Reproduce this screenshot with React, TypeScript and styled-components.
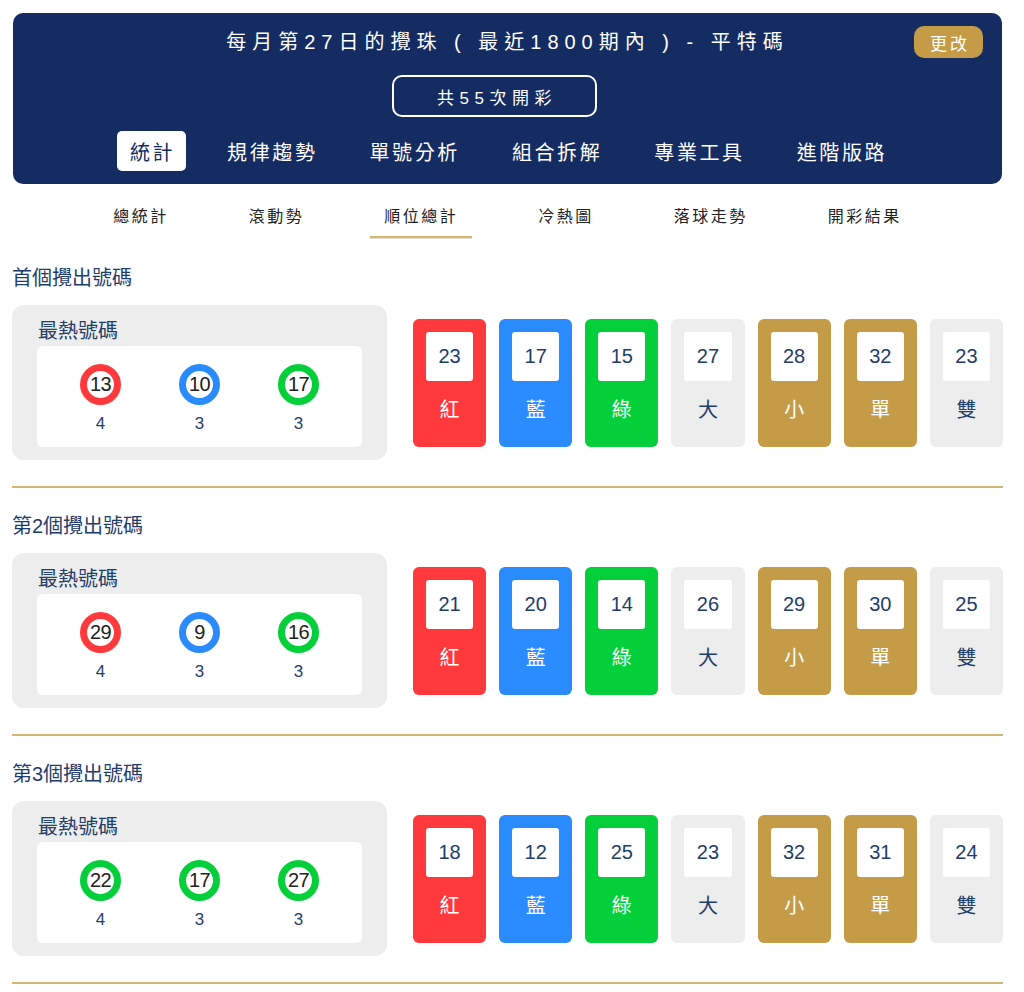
import React from 'react';
import styled, { createGlobalStyle } from 'styled-components';

const COLORS = {
    navy: '#142c62',
    text: '#1f3d6b',
    gold: '#c49b47',
    line: '#d2b677',
    red: '#ff393c',
    blue: '#2a8bff',
    green: '#02cf39',
    grey: '#ededed',
    white: '#ffffff',
};

const FONT = `"Liberation Sans", "Noto Sans CJK TC", sans-serif`;

const GlobalStyle = createGlobalStyle`
    body {
        margin: 0;
        background: #fff;
        font-family: ${FONT};
    }
`;

const Page = styled.div`
    width: 991px;
    padding: 13px 0 0 12px;
`;

const Header = styled.header`
    margin: 0 1px;
    padding: 13px 19px 13px;
    background: ${COLORS.navy};
    border-radius: 10px;
    color: ${COLORS.white};
`;

const TitleRow = styled.div`
    display: grid;
    grid-template-columns: 1fr auto 1fr;
    align-items: center;
    height: 32px;
`;

const Title = styled.h1`
    grid-column: 2;
    margin: 0;
    font-size: 20px;
    font-weight: 400;
    letter-spacing: 6px;
    line-height: 28px;
    white-space: pre;
`;

const ChangeButton = styled.button`
    justify-self: end;
    width: 69px;
    height: 32px;
    border: none;
    border-radius: 10px;
    background: ${COLORS.gold};
    color: ${COLORS.white};
    font-family: ${FONT};
    font-size: 17px;
    letter-spacing: 3px;
    padding: 0 0 0 3px;
`;

const CountRow = styled.div`
    display: flex;
    justify-content: center;
    margin-top: 17px;
    padding-right: 26px;
`;

const CountBox = styled.div`
    width: 196px;
    height: 38px;
    border: 2px solid ${COLORS.white};
    border-radius: 10px;
    display: flex;
    align-items: center;
    justify-content: center;
    font-size: 17px;
    letter-spacing: 5.5px;
    padding-left: 5px;
    box-sizing: content-box;
`;

const MainNav = styled.nav`
    display: flex;
    justify-content: center;
    gap: 28px;
    margin-top: 14px;
`;

const MainTab = styled.div<{ $active?: boolean }>`
    height: 40px;
    padding: 0 11px 0 13px;
    border-radius: 5px;
    display: flex;
    align-items: center;
    font-size: 20px;
    letter-spacing: 2.6px;
    background: ${(p) => (p.$active ? COLORS.white : 'transparent')};
    color: ${(p) => (p.$active ? COLORS.navy : COLORS.white)};
`;

const SubNav = styled.nav`
    display: flex;
    justify-content: center;
    gap: 52px;
    margin: 12px 0 2px;
`;

const SubTab = styled.div<{ $active?: boolean }>`
    padding: 9px 14px 6px;
    line-height: 24px;
    font-size: 16px;
    letter-spacing: 2.5px;
    color: #222;
    border-bottom: 3px solid transparent;
    ${(p) =>
        p.$active &&
        `
        border-bottom: 2px solid #d8b672;
        box-shadow: 0 1px 0 #e6e0d2;
    `}
`;

const Section = styled.section`
    padding-top: 24px;
    border-bottom: 2px solid ${COLORS.line};
`;

const SectionTitle = styled.h2`
    margin: 0;
    font-size: 20px;
    font-weight: 400;
    line-height: 28px;
    color: ${COLORS.text};
`;

const SectionBody = styled.div`
    display: flex;
    align-items: center;
    gap: 26px;
    margin: 13px 0 26px;
`;

const HotCard = styled.div`
    width: 325px;
    height: 143px;
    padding: 12px 25px 0;
    background: ${COLORS.grey};
    border-radius: 12px;
`;

const HotTitle = styled.div`
    font-size: 20px;
    line-height: 28px;
    padding-left: 1px;
    color: ${COLORS.text};
`;

const HotBox = styled.div`
    margin-top: 1px;
    height: 101px;
    padding: 0 14px;
    background: ${COLORS.white};
    border-radius: 6px;
    display: grid;
    grid-template-columns: repeat(3, 1fr);
`;

const HotItem = styled.div`
    display: flex;
    flex-direction: column;
    align-items: center;
    padding-top: 18px;
`;

const Ball = styled.div<{ $color: string }>`
    width: 27px;
    height: 27px;
    border: 7px solid ${(p) => p.$color};
    border-radius: 50%;
    display: flex;
    align-items: center;
    justify-content: center;
    font-size: 20px;
    color: #222;
    letter-spacing: -0.5px;
`;

const HotCount = styled.div`
    margin-top: 8px;
    font-size: 17px;
    line-height: 22px;
    color: ${COLORS.text};
`;

const StatRow = styled.div`
    flex: 1;
    display: flex;
    gap: 13px;
`;

const StatCard = styled.div<{ $bg: string; $light?: boolean }>`
    flex: 1;
    height: 128px;
    box-sizing: border-box;
    padding: 13px 13px 0;
    border-radius: 6px;
    background: ${(p) => p.$bg};
    display: flex;
    flex-direction: column;
    align-items: center;
    color: ${(p) => (p.$light ? COLORS.text : COLORS.white)};
`;

const StatValue = styled.div`
    width: 100%;
    height: 49px;
    background: ${COLORS.white};
    border-radius: 3px;
    display: flex;
    align-items: center;
    justify-content: center;
    font-size: 20px;
    color: ${COLORS.text};
`;

const StatLabel = styled.div`
    margin-top: 15px;
    font-size: 20px;
    line-height: 28px;
`;

type Hot = { num: number; color: string; count: number };

type SectionData = {
    title: string;
    hot: Hot[];
    stats: number[];
};

const STAT_TYPES = [
    { label: '紅', bg: COLORS.red },
    { label: '藍', bg: COLORS.blue },
    { label: '綠', bg: COLORS.green },
    { label: '大', bg: COLORS.grey, light: true },
    { label: '小', bg: COLORS.gold },
    { label: '單', bg: COLORS.gold },
    { label: '雙', bg: COLORS.grey, light: true },
];

const SECTIONS: SectionData[] = [
    {
        title: '首個攪出號碼',
        hot: [
            { num: 13, color: COLORS.red, count: 4 },
            { num: 10, color: COLORS.blue, count: 3 },
            { num: 17, color: COLORS.green, count: 3 },
        ],
        stats: [23, 17, 15, 27, 28, 32, 23],
    },
    {
        title: '第2個攪出號碼',
        hot: [
            { num: 29, color: COLORS.red, count: 4 },
            { num: 9, color: COLORS.blue, count: 3 },
            { num: 16, color: COLORS.green, count: 3 },
        ],
        stats: [21, 20, 14, 26, 29, 30, 25],
    },
    {
        title: '第3個攪出號碼',
        hot: [
            { num: 22, color: COLORS.green, count: 4 },
            { num: 17, color: COLORS.green, count: 3 },
            { num: 27, color: COLORS.green, count: 3 },
        ],
        stats: [18, 12, 25, 23, 32, 31, 24],
    },
];

const MAIN_TABS = ['統計', '規律趨勢', '單號分析', '組合拆解', '專業工具', '進階版路'];
const SUB_TABS = ['總統計', '滾動勢', '順位總計', '冷熱圖', '落球走勢', '開彩結果'];

const PositionSection: React.FC<{ data: SectionData }> = ({ data }) => (
    <Section>
        <SectionTitle>{data.title}</SectionTitle>
        <SectionBody>
            <HotCard>
                <HotTitle>最熱號碼</HotTitle>
                <HotBox>
                    {data.hot.map((h, i) => (
                        <HotItem key={i}>
                            <Ball $color={h.color}>{h.num}</Ball>
                            <HotCount>{h.count}</HotCount>
                        </HotItem>
                    ))}
                </HotBox>
            </HotCard>
            <StatRow>
                {STAT_TYPES.map((t, i) => (
                    <StatCard key={t.label} $bg={t.bg} $light={t.light}>
                        <StatValue>{data.stats[i]}</StatValue>
                        <StatLabel>{t.label}</StatLabel>
                    </StatCard>
                ))}
            </StatRow>
        </SectionBody>
    </Section>
);

export default function App() {
    return (
        <>
            <GlobalStyle />
            <Page>
                <Header>
                    <TitleRow>
                        <Title>{'每月第27日的攪珠 ( 最近1800期內 ) - 平特碼'}</Title>
                        <ChangeButton>更改</ChangeButton>
                    </TitleRow>
                    <CountRow>
                        <CountBox>共55次開彩</CountBox>
                    </CountRow>
                    <MainNav>
                        {MAIN_TABS.map((t, i) => (
                            <MainTab key={t} $active={i === 0}>
                                {t}
                            </MainTab>
                        ))}
                    </MainNav>
                </Header>
                <SubNav>
                    {SUB_TABS.map((t) => (
                        <SubTab key={t} $active={t === '順位總計'}>
                            {t}
                        </SubTab>
                    ))}
                </SubNav>
                {SECTIONS.map((s) => (
                    <PositionSection key={s.title} data={s} />
                ))}
            </Page>
        </>
    );
}
